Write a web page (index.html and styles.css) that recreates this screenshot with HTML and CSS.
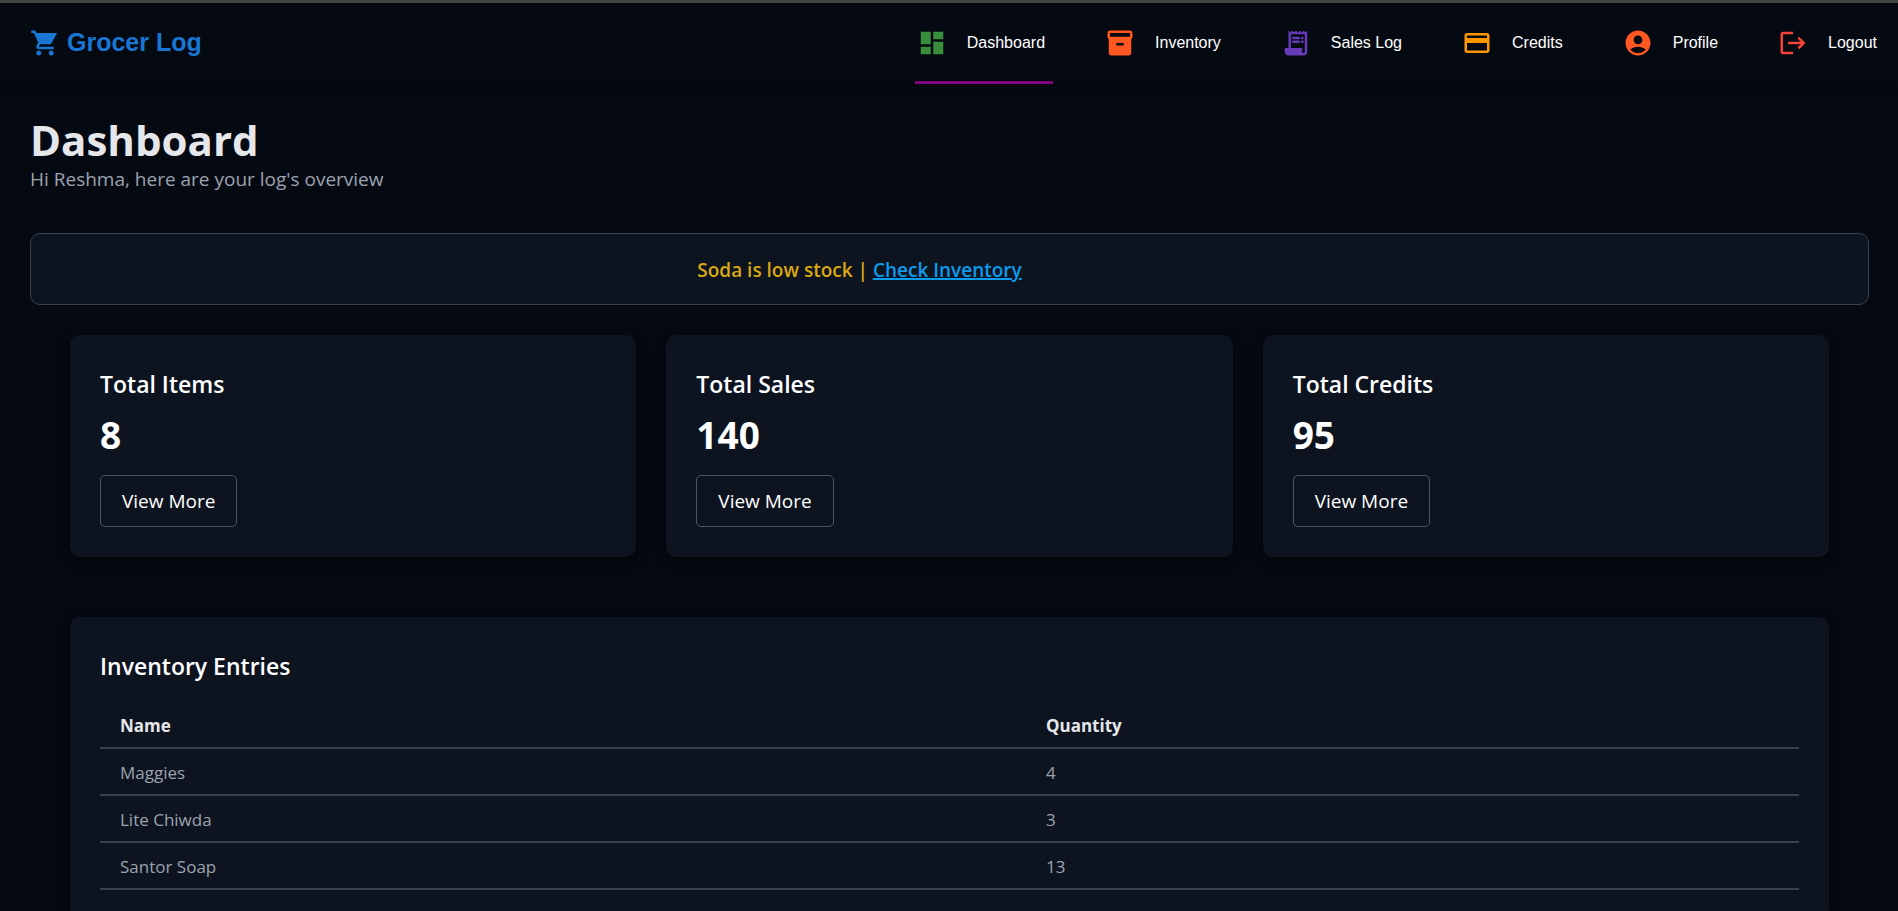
FILE: index.html
```html
<!DOCTYPE html>
<html lang="en">
<head>
<meta charset="utf-8">
<title>Grocer Log</title>
<link rel="stylesheet" href="styles.css">
</head>
<body>
<header class="header">
  <a class="brand" href="#">
    <svg class="icon" viewBox="0 0 24 24" aria-hidden="true"><path d="M7 18c-1.1 0-1.99.9-1.99 2S5.9 22 7 22s2-.9 2-2-.9-2-2-2zM1 2v2h2l3.6 7.59-1.35 2.45c-.16.28-.25.61-.25.96 0 1.1.9 2 2 2h12v-2H7.42c-.14 0-.25-.11-.25-.25l.03-.12.9-1.63h7.45c.75 0 1.41-.41 1.75-1.03L21.7 4H5.21l-.94-2H1zm16 16c-1.1 0-1.99.9-1.99 2s.89 2 1.99 2 2-.9 2-2-.9-2-2-2z"/></svg>
    <span>Grocer Log</span>
  </a>
  <nav class="nav">
    <a class="nav-link active" href="#"><svg class="icon green" viewBox="0 0 24 24" aria-hidden="true"><path d="M3 13h8V3H3v10zm0 8h8v-6H3v6zm10 0h8V11h-8v10zm0-18v6h8V3h-8z"/></svg><span>Dashboard</span></a>
    <a class="nav-link" href="#"><svg class="icon orange" viewBox="0 0 24 24" aria-hidden="true"><path d="M20 2H4c-1 0-2 .9-2 2v3.01c0 .72.43 1.34 1 1.69V20c0 1.1 1.1 2 2 2h14c.9 0 2-.9 2-2V8.7c.57-.35 1-.97 1-1.69V4c0-1.1-1-2-2-2zm-5 12H9v-2h6v2zm5-7H4V4l16-.02V7z"/></svg><span>Inventory</span></a>
    <a class="nav-link" href="#"><svg class="icon purple" viewBox="0 0 24 24" aria-hidden="true"><path d="M19.5 3.5 18 2l-1.5 1.5L15 2l-1.5 1.5L12 2l-1.5 1.5L9 2 7.5 3.5 6 2v14H3v3c0 1.66 1.34 3 3 3h12c1.66 0 3-1.34 3-3V2l-1.5 1.5zM19 19c0 .55-.45 1-1 1s-1-.45-1-1v-3H8V5h11v14z"/><path d="M9 7h6v2H9zM16 7h2v2h-2zM9 10h6v2H9zM16 10h2v2h-2z"/></svg><span>Sales Log</span></a>
    <a class="nav-link" href="#"><svg class="icon amber" viewBox="0 0 24 24" aria-hidden="true"><path d="M20 4H4c-1.11 0-1.99.89-1.99 2L2 18c0 1.11.89 2 2 2h16c1.11 0 2-.89 2-2V6c0-1.11-.89-2-2-2zm0 14H4v-6h16v6zm0-10H4V6h16v2z"/></svg><span>Credits</span></a>
    <a class="nav-link" href="#"><svg class="icon orange" viewBox="0 0 24 24" aria-hidden="true"><path d="M12 2C6.48 2 2 6.48 2 12s4.48 10 10 10 10-4.48 10-10S17.52 2 12 2zm0 4c1.93 0 3.5 1.57 3.5 3.5S13.93 13 12 13s-3.5-1.57-3.5-3.5S10.07 6 12 6zm0 14c-2.03 0-4.43-.82-6.14-2.88C7.55 15.8 9.68 15 12 15s4.45.8 6.14 2.12C16.43 19.18 14.03 20 12 20z"/></svg><span>Profile</span></a>
    <a class="nav-link" href="#"><svg class="icon red" viewBox="0 0 24 24" aria-hidden="true"><path d="m17 7-1.41 1.41L18.17 11H8v2h10.17l-2.58 2.58L17 17l5-5zM4 5h8V3H4c-1.1 0-2 .9-2 2v14c0 1.1.9 2 2 2h8v-2H4V5z"/></svg><span>Logout</span></a>
  </nav>
</header>
<main class="page">
  <h1 class="title">Dashboard</h1>
  <p class="subtitle">Hi Reshma, here are your log's overview</p>
  <div class="notice"><p>Soda is low stock | <a href="#">Check Inventory</a></p></div>
  <div class="content">
    <section class="stats">
      <article class="card stat"><h2>Total Items</h2><p class="value">8</p><button type="button">View More</button></article>
      <article class="card stat"><h2>Total Sales</h2><p class="value">140</p><button type="button">View More</button></article>
      <article class="card stat"><h2>Total Credits</h2><p class="value">95</p><button type="button">View More</button></article>
    </section>
    <section class="card">
      <h2>Inventory Entries</h2>
      <table class="entries">
        <thead><tr><th scope="col" class="name">Name</th><th scope="col">Quantity</th></tr></thead>
        <tbody>
          <tr><td>Maggies</td><td>4</td></tr>
          <tr><td>Lite Chiwda</td><td>3</td></tr>
          <tr><td>Santor Soap</td><td>13</td></tr>
        </tbody>
      </table>
    </section>
  </div>
</main>
</body>
</html>
```
FILE: styles.css
```css
* { box-sizing: border-box; }
body {
  margin: 0;
  border-top: 3px solid #444;
  background: #050912;
  color: #fff;
  font-family: "Open Sans", "Noto Sans", sans-serif;
}
h1, h2, p { margin: 0; }
.icon { width: 30px; height: 30px; fill: currentColor; flex: none; }
.green { color: #388e3c; }
.orange { color: #ff5722; }
.purple { color: #673ab7; }
.amber { color: #ff9800; }
.red { color: #f44336; }

.header {
  display: flex;
  justify-content: space-between;
  height: 81px;
  padding: 0 13px 0 30px;
  box-shadow: 0 4px 8px rgba(0, 0, 0, 0.2);
  font-family: "Liberation Sans", sans-serif;
}
.brand {
  display: flex;
  align-items: center;
  gap: 7px;
  padding-bottom: 2px;
  color: #1976d2;
  font-size: 25px;
  font-weight: 700;
  text-decoration: none;
}
.nav { display: flex; gap: 50px; }
.nav-link {
  display: flex;
  align-items: center;
  gap: 20px;
  padding: 1px 8px 0 2px;
  border-bottom: 3px solid transparent;
  font-size: 16px;
  text-decoration: none;
}
.nav-link span { color: #fff; }
.nav-link.active { border-color: #800080; }

.page { padding: 30px 29px 30px 30px; }
.title { color: #e5e7eb; font-size: 42px; line-height: 52px; }
.subtitle { color: #9ca3af; font-size: 19px; line-height: 26px; }
.notice {
  margin: 41px 0 30px;
  padding: 21px 180px 19px 0;
  border: 1px solid #374151;
  border-radius: 10px;
  background: #0d131f;
  color: #daa814;
  font-size: 19px;
  font-weight: 600;
  line-height: 30px;
  text-align: center;
}
.notice a { color: #0b9bec; text-decoration-thickness: 2px; }
.content { display: grid; gap: 60px; padding: 0 40px; }
.stats { display: grid; grid-template-columns: repeat(3, 1fr); gap: 30px; }
.card {
  padding: 30px;
  border-radius: 10px;
  background: #0d131f;
  box-shadow: 0 4px 12px rgba(0, 0, 0, 0.6);
}
.card h2 { font-size: 23px; font-weight: 600; line-height: 38px; }
.value { font-size: 37px; font-weight: 700; line-height: 48px; margin-top: 8px; }
.stat button {
  margin-top: 16px;
  padding: 1px 21px 0;
  border: 1px solid #4b5563;
  border-radius: 5px;
  background: transparent;
  color: #fff;
  font: 400 19px/49px "Open Sans", "Noto Sans", sans-serif;
}
.entries {
  width: 100%;
  margin-top: 16px;
  border-collapse: collapse;
  table-layout: fixed;
}
.entries th, .entries td {
  height: 47px;
  padding: 2px 20px 0;
  border-bottom: 2px solid #374151;
  color: #9ca3af;
  font-size: 17px;
  text-align: left;
}
.entries th { color: #e5e7eb; }
.name { width: 54.5%; }
```
